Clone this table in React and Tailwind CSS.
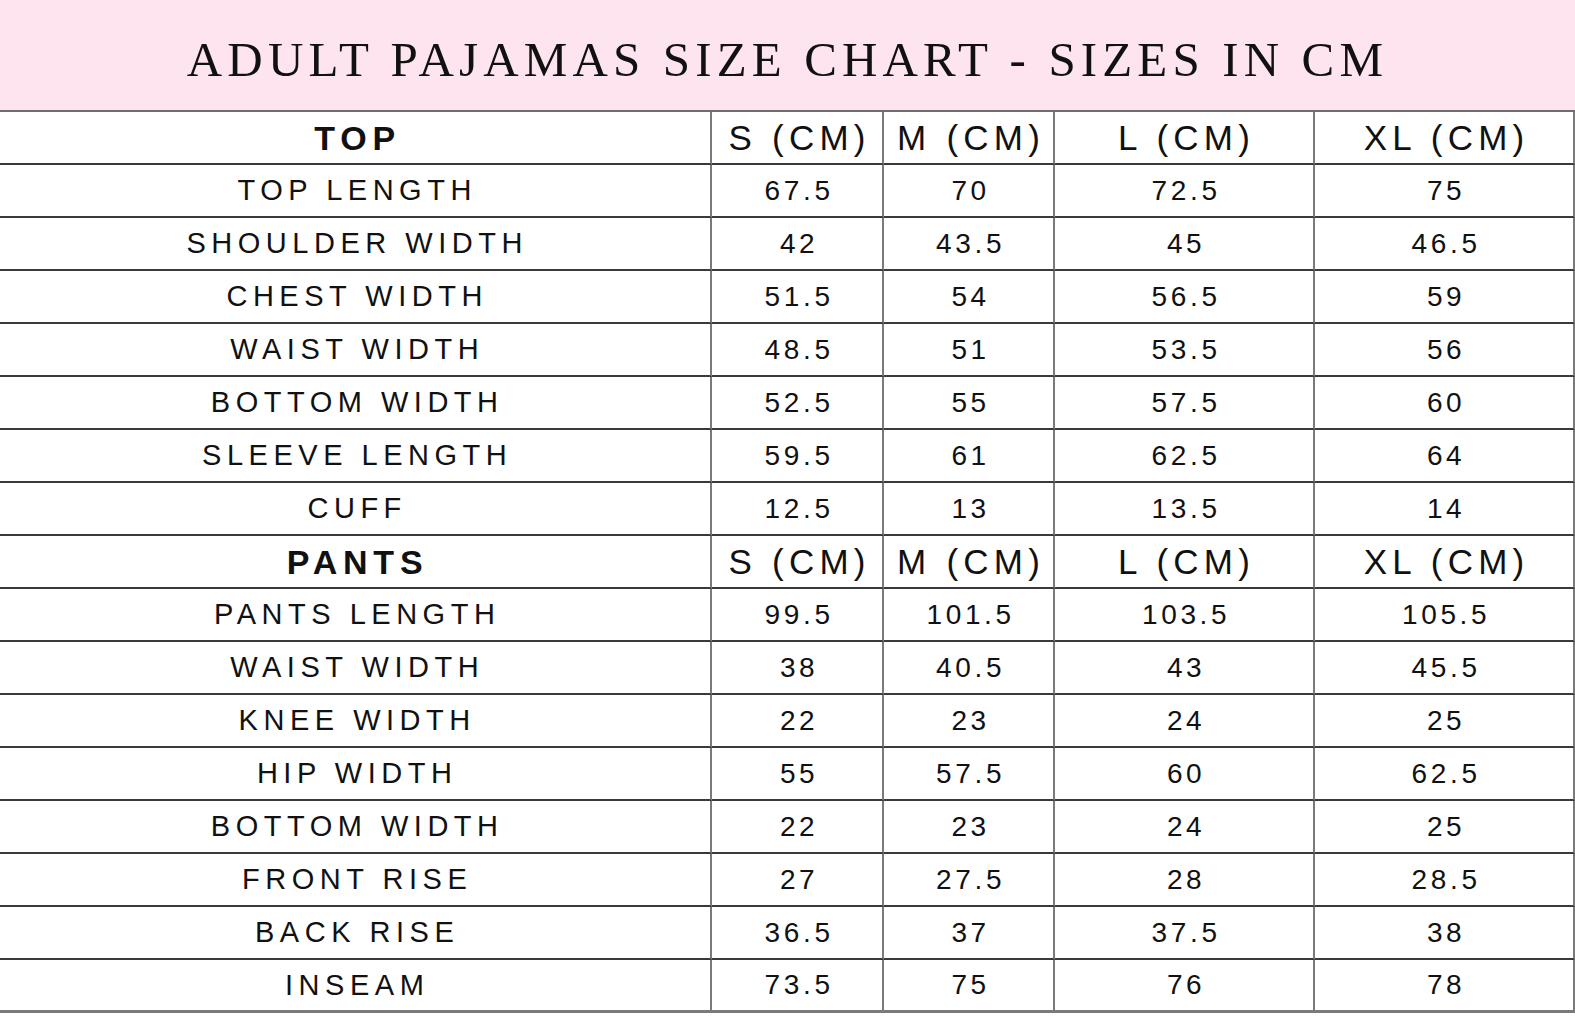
const SIZES = ['S (CM)', 'M (CM)', 'L (CM)', 'XL (CM)']

const TOP_ROWS = [
  ['TOP LENGTH', '67.5', '70', '72.5', '75'],
  ['SHOULDER WIDTH', '42', '43.5', '45', '46.5'],
  ['CHEST WIDTH', '51.5', '54', '56.5', '59'],
  ['WAIST WIDTH', '48.5', '51', '53.5', '56'],
  ['BOTTOM WIDTH', '52.5', '55', '57.5', '60'],
  ['SLEEVE LENGTH', '59.5', '61', '62.5', '64'],
  ['CUFF', '12.5', '13', '13.5', '14'],
]

const PANTS_ROWS = [
  ['PANTS LENGTH', '99.5', '101.5', '103.5', '105.5'],
  ['WAIST WIDTH', '38', '40.5', '43', '45.5'],
  ['KNEE WIDTH', '22', '23', '24', '25'],
  ['HIP WIDTH', '55', '57.5', '60', '62.5'],
  ['BOTTOM WIDTH', '22', '23', '24', '25'],
  ['FRONT RISE', '27', '27.5', '28', '28.5'],
  ['BACK RISE', '36.5', '37', '37.5', '38'],
  ['INSEAM', '73.5', '75', '76', '78'],
]

// last row gets the heavier grey rule
function Row({ cells, head, last }) {
  const rule = last ? 'border-b-[3px] border-b-[#7a7a7a]' : 'border-b-2 border-b-[#3a3a3a]'
  return cells.map((c, i) => {
    const first = i === 0
    let text
    if (head && first) text = 'text-[34px] font-bold tracking-[0.17em]'
    else if (head) text = 'text-[35px] tracking-[0.15em]'
    else if (first) text = 'text-[29px] tracking-[0.19em]'
    else text = 'text-[28px] tracking-[0.13em]'
    return (
      <div
        key={i}
        className={`flex h-[53px] items-center justify-center border-r-2 border-r-[#7a7a7a] ${rule} ${text} leading-none text-[#111]`}
      >
        <span className="pl-[0.15em]">{c}</span>
      </div>
    )
  })
}

export default function App() {
  return (
    <div className="min-h-[1018px] w-[1575px] bg-white" style={{ fontFamily: '"Liberation Sans", Arial, sans-serif' }}>
      {/* Title band */}
      <div className="flex h-[110px] items-center justify-center bg-[#fde4ef] pt-[8px]">
        <h1
          className="text-[49px] leading-none tracking-[0.105em] text-[#111]"
          style={{ fontFamily: '"Liberation Serif", "Times New Roman", serif' }}
        >
          ADULT PAJAMAS SIZE CHART - SIZES IN CM
        </h1>
      </div>
      <div className="h-[2px] bg-[#6e6e6e]" />

      {/* Chart */}
      <div className="grid grid-cols-[712px_172px_171px_260px_1fr]">
        <Row cells={['TOP', ...SIZES]} head />
        {TOP_ROWS.map((r) => (
          <Row key={r[0]} cells={r} />
        ))}
        <Row cells={['PANTS', ...SIZES]} head />
        {PANTS_ROWS.map((r, i) => (
          <Row key={r[0] + i} cells={r} last={i === PANTS_ROWS.length - 1} />
        ))}
      </div>
    </div>
  )
}
